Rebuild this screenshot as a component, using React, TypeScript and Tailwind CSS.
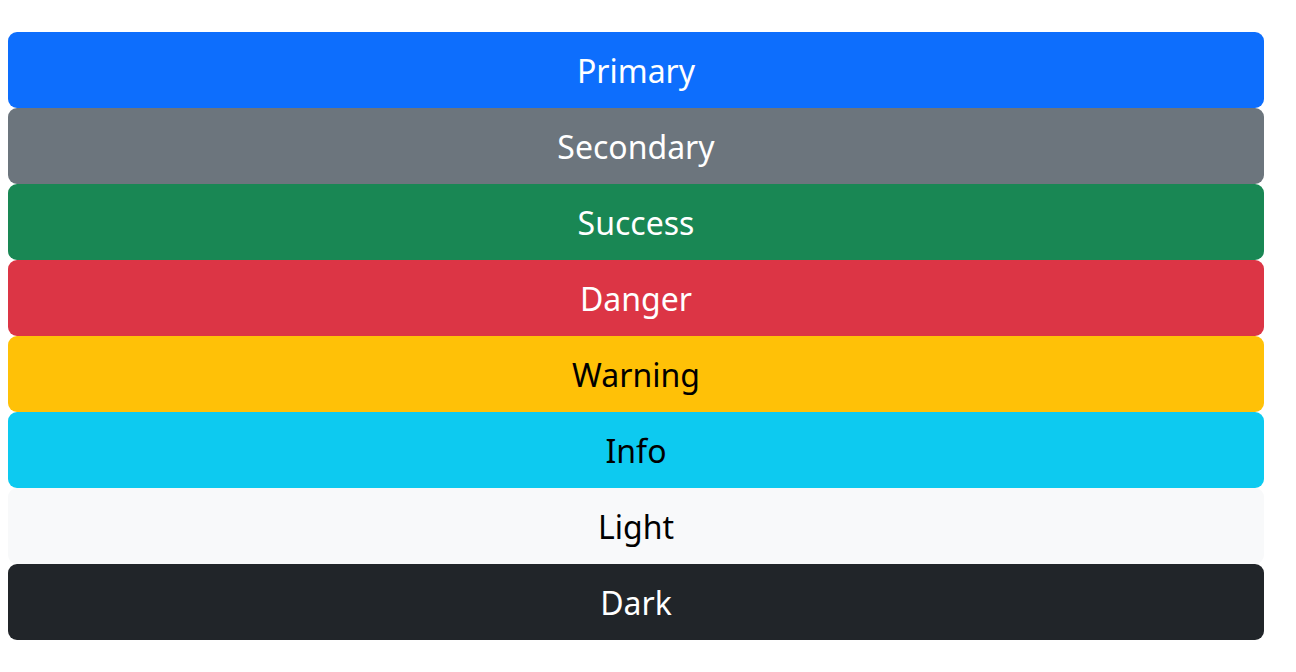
const variants = [
  { label: "Primary", cls: "bg-[#0d6efd] text-white" },
  { label: "Secondary", cls: "bg-[#6c757d] text-white" },
  { label: "Success", cls: "bg-[#198754] text-white" },
  { label: "Danger", cls: "bg-[#dc3545] text-white" },
  { label: "Warning", cls: "bg-[#ffc107] text-black" },
  { label: "Info", cls: "bg-[#0dcaf0] text-black" },
  { label: "Light", cls: "bg-[#f8f9fa] text-black" },
  { label: "Dark", cls: "bg-[#212529] text-white" },
];

export default function App() {
  return (
    <div className="w-[1296px] h-[672px] bg-white pt-8 pl-2 pr-8 font-['Noto_Sans',sans-serif]">
      <div className="flex flex-col">
        {variants.map((v) => (
          <button
            key={v.label}
            className={`h-[76px] w-full rounded-[9px] pt-[2px] text-[32px] leading-none ${v.cls}`}
          >
            {v.label}
          </button>
        ))}
      </div>
    </div>
  );
}
